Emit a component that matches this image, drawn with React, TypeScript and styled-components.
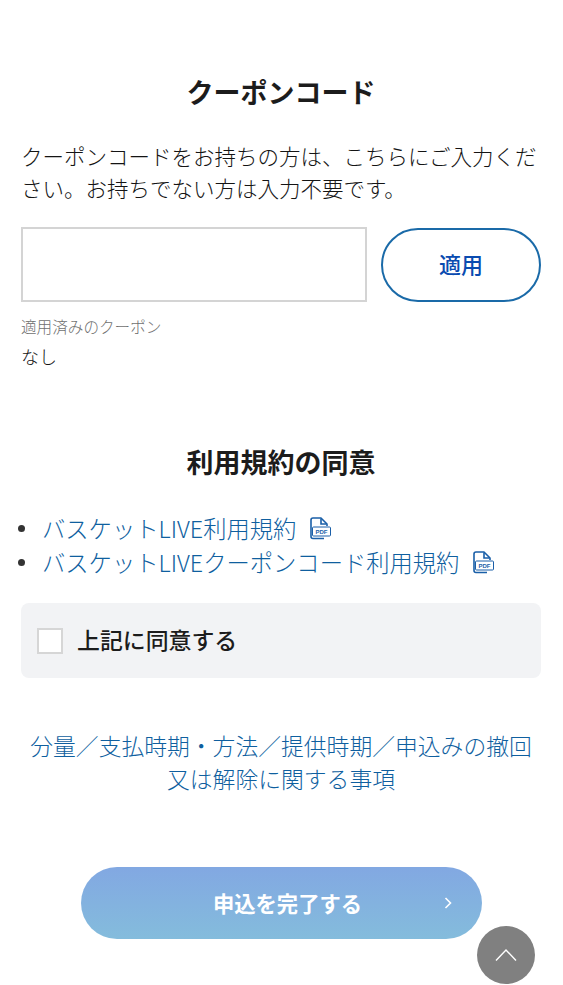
import React from "react";
import styled, { createGlobalStyle } from "styled-components";

const GlobalStyle = createGlobalStyle`
  html, body {
    margin: 0;
    padding: 0;
    background: #fff;
  }
  body {
    font-family: "Noto Sans CJK JP", "Noto Sans", sans-serif;
    color: #222;
    overflow: hidden;
  }
  * {
    box-sizing: border-box;
  }
`;

const Page = styled.main`
  position: relative;
  width: 563px;
  height: 985px;
  padding: 74px 22px 0 21px;
  overflow: hidden;
`;

const Heading = styled.h2`
  margin: 0;
  font-size: 27px;
  line-height: 36px;
  font-weight: 700;
  text-align: center;
  color: #1c1c1c;
`;

const Lead = styled.p`
  margin: 30px 0 0;
  font-size: 21.5px;
  line-height: 32px;
  font-weight: 300;
  color: #141414;
`;

const CodeRow = styled.div`
  display: flex;
  gap: 14px;
  margin-top: 23px;
`;

const CodeInput = styled.input`
  width: 346px;
  height: 75px;
  border: 2px solid #d4d4d4;
  background: #fff;
  outline: none;
`;

const ApplyButton = styled.button`
  width: 160px;
  height: 74px;
  margin-top: 1px;
  padding: 0 0 5px;
  border: 2px solid #1a6aa8;
  border-radius: 37px;
  background: #fff;
  color: #0a4bb0;
  font-family: inherit;
  font-size: 22px;
  font-weight: 500;
`;

const AppliedLabel = styled.div`
  margin-top: 13px;
  font-size: 15.6px;
  line-height: 22px;
  font-weight: 300;
  color: #6f6f6f;
`;

const AppliedValue = styled.div`
  margin-top: 7px;
  font-size: 18px;
  line-height: 24px;
  font-weight: 300;
  color: #141414;
`;

const TermsHeading = styled(Heading)`
  margin-top: 76px;
`;

const TermsList = styled.ul`
  list-style: none;
  margin: 31px 0 0;
  padding: 0;
`;

const TermsItem = styled.li`
  position: relative;
  display: flex;
  align-items: center;
  height: 34px;
  padding-left: 21px;
  &::before {
    content: "";
    position: absolute;
    left: -3px;
    top: 14px;
    width: 7px;
    height: 7px;
    border-radius: 50%;
    background: #333;
  }
`;

const TextLink = styled.a`
  color: #0f5f9f;
  font-size: 23.3px;
  line-height: 34px;
  font-weight: 300;
  text-decoration: none;
`;

const PdfMark = styled.svg`
  flex: none;
  width: 22px;
  height: 23px;
  margin-left: 13px;
`;

const PdfLabel = styled.text`
  font-family: "Liberation Sans", sans-serif;
  font-size: 6px;
  font-weight: 700;
  fill: #1a5fa8;
`;

const AgreeBox = styled.label`
  display: flex;
  align-items: center;
  gap: 14px;
  height: 75px;
  margin-top: 24px;
  padding-left: 16px;
  border-radius: 8px;
  background: #f2f3f5;
`;

const AgreeCheck = styled.span`
  width: 26px;
  height: 26px;
  border: 2px solid #d6d6d6;
  background: #fff;
`;

const AgreeText = styled.span`
  padding-bottom: 3px;
  font-size: 22.9px;
  font-weight: 500;
  color: #1c1c1c;
`;

const NoticeLink = styled(TextLink)`
  display: block;
  margin-top: 51px;
  line-height: 33px;
  font-size: 22.8px;
  text-align: center;
`;

const SubmitButton = styled.button`
  position: relative;
  display: block;
  width: 401px;
  height: 72px;
  margin: 72px 0 0 60px;
  padding: 0 0 2px 12px;
  border: none;
  border-radius: 36px;
  background: linear-gradient(to bottom, #82a8e2, #84bcdc);
  color: #fff;
  font-family: inherit;
  font-size: 21.3px;
  font-weight: 700;
`;

const SubmitArrow = styled.svg`
  position: absolute;
  right: 29px;
  top: 29px;
  width: 10px;
  height: 14px;
`;

const ScrollTop = styled.button`
  position: absolute;
  left: 477px;
  top: 926px;
  display: grid;
  place-items: center;
  width: 58px;
  height: 58px;
  padding: 0;
  border: none;
  border-radius: 50%;
  background: #808080;
`;

const PdfIcon: React.FC = () => (
  <PdfMark viewBox="0 0 22 23" fill="none">
    <path
      d="M15 21.5H4a2 2 0 0 1-2-2V3a2 2 0 0 1 2-2h8l6 6v2"
      stroke="#1a5fa8"
      strokeWidth="1.6"
      strokeLinejoin="round"
    />
    <path d="M12 1.5V7h5.5" stroke="#1a5fa8" strokeWidth="1.6" />
    <rect x="3.5" y="10" width="18" height="9" rx="1" fill="#fff" stroke="#1a5fa8" strokeWidth="1" />
    <PdfLabel x="12.5" y="16.8" textAnchor="middle">PDF</PdfLabel>
  </PdfMark>
);

export default function App() {
  return (
    <Page>
      <GlobalStyle />
      <Heading>クーポンコード</Heading>
      <Lead>
        クーポンコードをお持ちの方は、こちらにご入力ください。お持ちでない方は入力不要です。
      </Lead>
      <CodeRow>
        <CodeInput type="text" />
        <ApplyButton>適用</ApplyButton>
      </CodeRow>
      <AppliedLabel>適用済みのクーポン</AppliedLabel>
      <AppliedValue>なし</AppliedValue>

      <TermsHeading>利用規約の同意</TermsHeading>
      <TermsList>
        <TermsItem>
          <TextLink>バスケットLIVE利用規約</TextLink>
          <PdfIcon />
        </TermsItem>
        <TermsItem>
          <TextLink>バスケットLIVEクーポンコード利用規約</TextLink>
          <PdfIcon />
        </TermsItem>
      </TermsList>
      <AgreeBox>
        <AgreeCheck />
        <AgreeText>上記に同意する</AgreeText>
      </AgreeBox>

      <NoticeLink>分量／支払時期・方法／提供時期／申込みの撤回又は解除に関する事項</NoticeLink>

      <SubmitButton>
        申込を完了する
        <SubmitArrow viewBox="0 0 10 14" fill="none">
          <path d="M2.5 2l5 5-5 5" stroke="#fff" strokeWidth="1.6" />
        </SubmitArrow>
      </SubmitButton>
      <ScrollTop aria-label="ページ上部へ">
        <svg width="22" height="14" viewBox="0 0 22 14" fill="none">
          <path d="M1 12.5L11 2l10 10.5" stroke="#fff" strokeWidth="1.4" />
        </svg>
      </ScrollTop>
    </Page>
  );
}
